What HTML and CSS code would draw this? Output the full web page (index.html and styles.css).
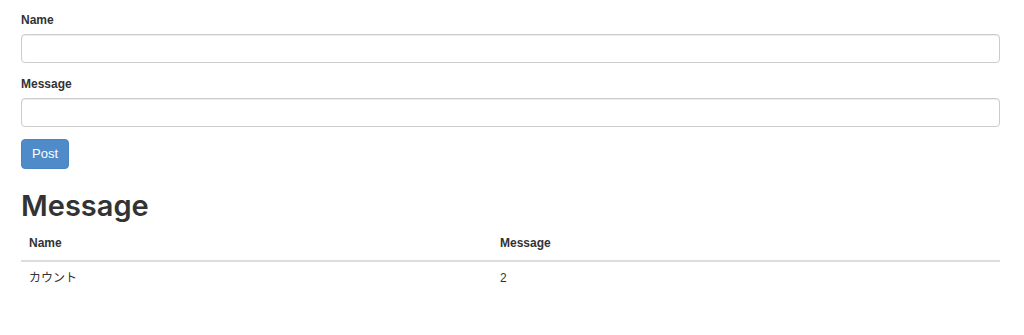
FILE: index.html
```html
<!DOCTYPE html>
<html lang="ja">
<head>
    <meta charset="UTF-8">
    <meta name="viewport" content="width=device-width, initial-scale=1.0">
    <title>Message Board</title>
    <link rel="stylesheet" href="styles.css">
</head>
<body>
    <div class="container">
        <form class="post-form">
            <div class="form-group">
                <label for="name">Name</label>
                <input type="text" id="name" class="form-control">
            </div>
            <div class="form-group">
                <label for="message">Message</label>
                <input type="text" id="message" class="form-control">
            </div>
            <button type="button" class="btn btn-primary">Post</button>
        </form>

        <h2>Message</h2>
        <table class="table">
            <thead>
                <tr>
                    <th class="col-name">Name</th>
                    <th>Message</th>
                </tr>
            </thead>
            <tbody>
                <tr>
                    <td>カウント</td>
                    <td>2</td>
                </tr>
            </tbody>
        </table>
    </div>
</body>
</html>
```

FILE: styles.css
```css
body {
    margin: 0;
    font-family: "Liberation Sans", Arial, "Noto Sans CJK JP", sans-serif;
    font-size: 12px;
    line-height: 17px;
    color: #333;
    background: #fff;
}
.container {
    padding: 12px 24px 0 21px;
}
.form-group {
    margin-bottom: 13px;
}
.form-group:last-of-type {
    margin-bottom: 12px;
}
label {
    display: block;
    font-weight: bold;
    margin-bottom: 5px;
}
.form-control {
    display: block;
    box-sizing: border-box;
    width: 100%;
    height: 29px;
    padding: 5px 10px;
    font-family: inherit;
    font-size: 12px;
    border: 1px solid #ccc;
    border-radius: 4px;
    box-shadow: inset 0 1px 1px rgba(0, 0, 0, 0.075);
}
.btn {
    display: inline-block;
    box-sizing: border-box;
    height: 30px;
    padding: 0 10px;
    font-family: inherit;
    font-size: 13px;
    line-height: 28px;
    border: 1px solid transparent;
    border-radius: 4px;
    cursor: pointer;
}
.btn-primary {
    color: #fff;
    background: #4f8bc9;
    border-color: #4a85c3;
}
h2 {
    font-family: Inter, "Liberation Sans", sans-serif;
    font-size: 29px;
    font-weight: 600;
    line-height: 32px;
    margin: 21px 0 5px;
}
.table {
    width: 100%;
    border-collapse: collapse;
}
.table th,
.table td {
    text-align: left;
    padding: 8px;
    line-height: 17px;
    vertical-align: top;
}
.table th {
    border-bottom: 2px solid #ddd;
}
.col-name {
    width: 455px;
}
```
